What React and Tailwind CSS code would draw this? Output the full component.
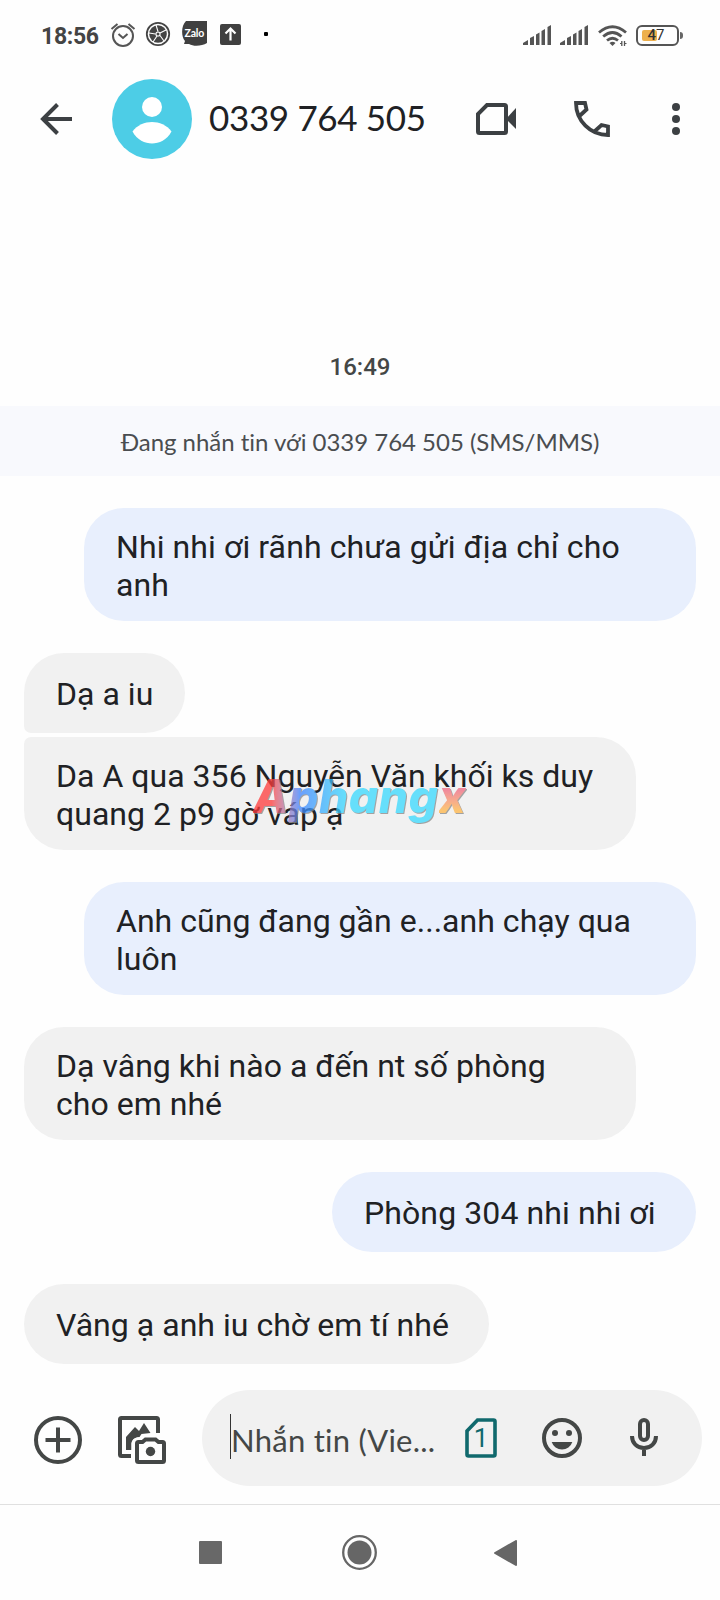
const messages = [
  { id: 1, mine: true, lines: ['Nhi nhi ơi rãnh chưa gửi địa chỉ cho', 'anh'], width: 'w-[612px]', tracking: 'tracking-[0.1px]' },
  { id: 2, mine: false, lines: ['Dạ a iu'], width: 'w-[161px]', shape: 'rounded-bl-[7px]' },
  { id: 3, mine: false, lines: ['Da A qua 356 Nguyễn Văn khối ks duy', 'quang 2 p9 gờ váp ạ'], width: 'w-[612px]', shape: 'rounded-tl-[7px]', grouped: true },
  { id: 4, mine: true, lines: ['Anh cũng đang gần e...anh chạy qua', 'luôn'], width: 'w-[612px]' },
  { id: 5, mine: false, lines: ['Dạ vâng khi nào a đến nt số phòng', 'cho em nhé'], width: 'w-[612px]' },
  { id: 6, mine: true, lines: ['Phòng 304 nhi nhi ơi'], width: 'w-[364px]', tracking: 'tracking-[0.1px]' },
  { id: 7, mine: false, lines: ['Vâng ạ anh iu chờ em tí nhé'], width: 'w-[465px]' },
]

function Signal({ className }) {
  return (
    <svg className={className} width="28" height="20" viewBox="0 0 28 20" fill="#555">
      <path d="M0 20v-2l5-3v5zM7 20v-7l4-2v9zM13 20V9.500l3.500-2v12.500zM18.500 20V6l3.500-2v16zM24.500 20V2l3.500-2v20z" />
    </svg>
  )
}

function StatusBar() {
  return (
    <div className="h-[70px] flex items-center pl-[41px] pr-[37px]">
      <span className="w-[59px] text-[23px] font-bold text-[#444] leading-none whitespace-nowrap tracking-[-0.3px] pt-0.5">18:56</span>

      {/* Alarm */}
      <svg className="ml-[10px]" width="26" height="26" viewBox="0 0 26 26" fill="none" stroke="#555" strokeWidth="2">
        <circle cx="13" cy="14" r="10" />
        <path d="M1.500 7L7.500 2M24.500 7L18.500 2M8.500 12l4.500 4 4.500-4" />
      </svg>

      {/* Wheel */}
      <svg className="ml-[9px] -mt-0.5" width="26" height="26" viewBox="0 0 26 26">
        <circle cx="13" cy="13" r="11.200" fill="none" stroke="#444" strokeWidth="1.800" />
        <circle cx="13" cy="13" r="8.800" fill="#444" />
        <path d="M13 10.500L11 4M15 12L21 9M15 14.500L19 20M12 15L8 21M10.500 13L4 12" stroke="#fff" strokeWidth="1.100" />
        <circle cx="13" cy="13" r="2.600" fill="#fff" />
        <circle cx="13" cy="13" r="1.500" fill="#444" />
      </svg>

      {/* Zalo */}
      <div className="relative ml-[11px] w-[25px] h-[25px] -mt-1">
        <svg width="25" height="25" viewBox="0 0 25 25" className="block">
          <path d="M4 0h21v22c-5 3-13 4-18 1H2l1-3C-1 15-1 5 4 0z" fill="#404040" />
        </svg>
        <span className="absolute left-[2.500px] top-[6px] text-[10.500px] leading-[12px] font-bold text-white font-['Lato',sans-serif] tracking-[-0.2px]">Zalo</span>
      </div>

      {/* Upload */}
      <svg className="ml-[13px] -mt-0.5" width="21" height="21" viewBox="0 0 21 21">
        <rect width="21" height="21" rx="2" fill="#404040" />
        <path d="M10.500 16.500V5M5.500 9.500l5-5 5 5" fill="none" stroke="#fff" strokeWidth="2.200" />
      </svg>
      <span className="ml-[23px] w-1 h-1 rounded-[1px] bg-black -mt-0.5" />

      <div className="ml-auto flex items-center">
        <Signal />
        <Signal className="ml-[9px]" />
        <svg className="ml-[10px] mt-0.5" width="29" height="22" viewBox="0 0 29 22" fill="none" stroke="#555" strokeWidth="2.800">
          <path d="M1 7.500Q14.500-4 28 7.500M5.200 11.500Q14.500 3.500 23.500 11.500M9 15.500Q14.500 11 20 15.500" />
          <path d="M14.500 21l-3-3q3-2.300 6 0z" fill="#555" stroke="none" />
          <path d="M23.800 16v5M26.500 16v5" strokeWidth="1.300" />
          <path d="M22 18.500h2M26.500 18.500h2" strokeWidth="1" />
        </svg>
        <div className="relative ml-[9px] w-[43px] h-[21px] rounded-[6px] border-[2.500px] border-[#555] flex items-center justify-center">
          <span className="absolute left-[4px] top-[3px] w-[15px] h-[11px] rounded-[2px] bg-[#edb04e]" />
          <span className="relative text-[15px] leading-none text-[#333] pr-[3px]"><b className="font-medium">4</b>7</span>
        </div>
        <span className="ml-px w-[3px] h-[7px] rounded-r-sm bg-[#666]" />
      </div>
    </div>
  )
}

function Header() {
  return (
    <header className="h-[98px] flex items-center pl-[40px] pr-[40px]">
      <svg width="32" height="32" viewBox="0 0 32 32" fill="none" stroke="#3c4043" strokeWidth="4">
        <path d="M32 16H4M17.500 1.500L3 16l14.500 14.500" />
      </svg>
      <svg className="ml-[40px]" width="80" height="80" viewBox="0 0 80 80">
        <circle cx="40" cy="40" r="40" fill="#4dcde6" />
        <circle cx="40" cy="28" r="10" fill="#fff" />
        <path d="M20.500 52.500C25 46 33 43 40 43s15 3 19.500 9.500C55 61 47 64.500 40 64.500S25 61 20.500 52.500z" fill="#fff" />
      </svg>
      <h1 className="ml-[17px] w-[267px] pb-[3px] text-[35px] leading-none text-[#202124] whitespace-nowrap tracking-[-0.35px] font-['Lato',sans-serif]">0339 764 505</h1>

      {/* Video call */}
      <svg width="40" height="32" viewBox="0 0 40 32">
        <path d="M11 2h17.500a1.500 1.500 0 0 1 1.500 1.500v25a1.500 1.500 0 0 1-1.500 1.500h-25A1.500 1.500 0 0 1 2 28.500V11z" fill="none" stroke="#3c4043" strokeWidth="4" />
        <path d="M30 16L40 5v21z" fill="#3c4043" />
      </svg>
      {/* Voice call */}
      <svg className="ml-[58px]" width="36" height="36" viewBox="0 0 36 36" fill="none" stroke="#3c4043" strokeWidth="3.800">
        <path d="M5.500 15L12.500 8.500 11 2H2A32 32 0 0 0 34 34v-8.500l-6.500-1.500L21 30" />
      </svg>
      <div className="ml-auto flex flex-col gap-1">
        <i className="w-2 h-2 rounded-full bg-[#3c4043]" />
        <i className="w-2 h-2 rounded-full bg-[#3c4043]" />
        <i className="w-2 h-2 rounded-full bg-[#3c4043]" />
      </div>
    </header>
  )
}

function Bubble({ message }) {
  const { mine, lines, width, shape, tracking, grouped } = message
  return (
    <div className={`flex ${mine ? 'justify-end' : 'justify-start'} ${grouped ? 'mt-1' : 'mt-8'}`}>
      <div className={`${width} ${lines.length > 1 ? 'h-[113px] pt-5' : 'h-[80px] pt-[22px]'} pl-8 rounded-[40px] ${shape || ''} ${mine ? 'bg-[#e8effd]' : 'bg-[#f1f1f1]'}`}>
        {lines.map(line => (
          <p key={line} className={`text-[32px] leading-[38px] text-[#202124] whitespace-nowrap ${tracking || 'tracking-[0.03px]'}`}>{line}</p>
        ))}
      </div>
    </div>
  )
}

function Watermark() {
  return (
    <div className="absolute left-[253px] top-[766px] opacity-75 text-[46px] leading-[60px] font-extrabold italic font-['Inter',sans-serif] whitespace-nowrap tracking-[0.6px] drop-shadow-[1px_1px_0_#888]">
      <span className="bg-linear-to-r from-[#ff3b3b] from-10% via-[#3f83ff] via-25% to-[#38d9ff] to-50% bg-clip-text text-transparent">Aphang</span>
      <span className="bg-linear-to-b from-[#f06a80] from-40% to-[#ffb648] to-75% bg-clip-text text-transparent">x</span>
    </div>
  )
}

function Composer() {
  return (
    <div className="h-[141px] pt-[26px] pl-[34px] pr-[18px] flex items-start border-b border-[#e0e0e0]">
      <svg className="mt-[26px]" width="48" height="48" viewBox="0 0 48 48" fill="none" stroke="#444746" strokeWidth="4">
        <circle cx="24" cy="24" r="22" />
        <path d="M24 11.500v25M11.500 24h25" />
      </svg>

      {/* Gallery + camera */}
      <svg className="ml-[36px] mt-[26px]" width="48" height="48" viewBox="0 0 48 48">
        <path d="M13 40H3.500A1.500 1.500 0 0 1 2 38.500v-35A1.500 1.500 0 0 1 3.500 2h35A1.500 1.500 0 0 1 40 3.500V17" fill="none" stroke="#444746" strokeWidth="4" />
        <path d="M8 34V21l9-10 4 4 5-8 6.500 10-9 1-2 3c-5 0-8 4-8 7v6z" fill="#444746" />
        <path d="M19.500 26h5l3-3h11l3 3h3a1.500 1.500 0 0 1 1.500 1.500v17a1.500 1.500 0 0 1-1.500 1.500h-25a1.500 1.500 0 0 1-1.500-1.500v-17a1.500 1.500 0 0 1 1.500-1.500z" fill="#fefefe" stroke="#fefefe" strokeWidth="9" />
        <path d="M20.500 26h4l3-2.500h10l3 2.500h4a1.500 1.500 0 0 1 1.500 1.500v17a1.500 1.500 0 0 1-1.500 1.500h-24a1.500 1.500 0 0 1-1.500-1.500v-17a1.500 1.500 0 0 1 1.500-1.500z" fill="none" stroke="#444746" strokeWidth="4" />
        <circle cx="32.500" cy="35.500" r="4.700" fill="#444746" />
      </svg>

      <div className="ml-[36px] flex-1 h-24 rounded-full bg-[#f1f1f1] flex items-center pl-[28px]">
        <span className="w-px h-[45px] -mt-1 bg-[#333]" />
        <span className="w-[234px] pt-1 text-[31px] leading-[40px] text-[#444746] whitespace-nowrap [font-variant-ligatures:none] tracking-[0.25px] font-['Lato',sans-serif]">Nhắn tin (Vie...</span>
        {/* SIM */}
        <div className="relative w-8 h-10">
          <svg className="block" width="32" height="40" viewBox="0 0 32 40" fill="none" stroke="#10696d" strokeWidth="3.600">
            <path d="M12.500 2h16A1.500 1.500 0 0 1 30 3.500v33a1.500 1.500 0 0 1-1.500 1.500h-25A1.500 1.500 0 0 1 2 36.500V13z" />
          </svg>
          <span className="absolute inset-0 text-center text-[26px] leading-[41px] text-[#10696d]">1</span>
        </div>
        <svg className="ml-[45px]" width="40" height="40" viewBox="0 0 40 40">
          <circle cx="20" cy="20" r="18" fill="none" stroke="#444746" strokeWidth="4" />
          <circle cx="13" cy="15" r="3" fill="#444746" />
          <circle cx="27" cy="15" r="3" fill="#444746" />
          <path d="M9.700 24h20.600a10.800 10.800 0 0 1-20.600 0z" fill="#444746" />
        </svg>
        <svg className="ml-[48px] -mt-0.5" width="28" height="38" viewBox="0 0 28 38" fill="none" stroke="#444746" strokeWidth="4">
          <rect x="10" y="2" width="8" height="20" rx="4" />
          <path d="M2 18c0 7 5 12 12 12s12-5 12-12M14 30v8" />
        </svg>
      </div>
    </div>
  )
}

function NavBar() {
  return (
    <nav className="h-[95px] flex items-center pl-[199px]">
      <span className="w-[23px] h-[23px] rounded-[1px] bg-[#686868]" />
      <svg className="ml-[120px]" width="35" height="35" viewBox="0 0 35 35">
        <circle cx="17.500" cy="17.500" r="16.300" fill="none" stroke="#666" strokeWidth="2.300" />
        <circle cx="17.500" cy="17.500" r="12" fill="#666" />
      </svg>
      <svg className="ml-[117px]" width="23" height="26" viewBox="0 0 23 26">
        <path d="M22 1v24L1 13z" fill="#666" stroke="#666" strokeWidth="2" strokeLinejoin="round" />
      </svg>
    </nav>
  )
}

export default function App() {
  return (
    <div className="relative w-[720px] h-[1600px] overflow-hidden bg-[#fefefe] flex flex-col font-['Roboto',sans-serif]">
      <StatusBar />
      <Header />

      <main className="h-[1196px] pt-[183px]">
        <p className="h-[32px] text-center text-[24px] leading-[32px] font-medium text-[#444746]">16:49</p>
        <div className="mt-[23px] h-[70px] bg-[#f8f9fd] flex items-center justify-center">
          <span className="pt-0.5 text-[24px] leading-8 text-[#4a4d50] whitespace-nowrap [font-variant-ligatures:none] tracking-[-0.02px] font-['Lato',sans-serif]">Đang nhắn tin với 0339 764 505 (SMS/MMS)</span>
        </div>
        <div className="px-6 flex flex-col">
          {messages.map(m => <Bubble key={m.id} message={m} />)}
        </div>
      </main>

      <Composer />
      <NavBar />
      <Watermark />
    </div>
  )
}
